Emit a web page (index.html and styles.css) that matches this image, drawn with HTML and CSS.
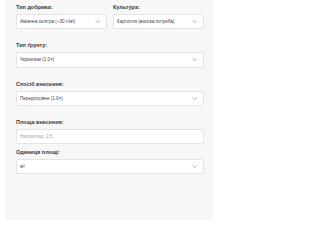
FILE: index.html
```html
<!DOCTYPE html>
<html lang="uk">
<head>
<meta charset="utf-8">
<link rel="stylesheet" href="styles.css">
</head>
<body>
<div class="panel">
  <div class="row">
    <div class="group">
      <div class="label">Тип добрива:</div>
      <div class="field select"><span>Аміачна селітра (~30 г/м²)</span><svg class="chev" viewBox="0 0 10 6"><path d="M1 1l4 4 4-4"/></svg></div>
    </div>
    <div class="group">
      <div class="label">Культура:</div>
      <div class="field select"><span>Картопля (висока потреба)</span><svg class="chev" viewBox="0 0 10 6"><path d="M1 1l4 4 4-4"/></svg></div>
    </div>
  </div>
  <div class="group">
    <div class="label">Тип ґрунту:</div>
    <div class="field select"><span>Чорнозем (1.0×)</span><svg class="chev" viewBox="0 0 10 6"><path d="M1 1l4 4 4-4"/></svg></div>
  </div>
  <div class="group">
    <div class="label">Спосіб внесення:</div>
    <div class="field select"><span>Передпосівне (1.0×)</span><svg class="chev" viewBox="0 0 10 6"><path d="M1 1l4 4 4-4"/></svg></div>
  </div>
  <div class="group tight">
    <div class="label">Площа внесення:</div>
    <div class="field"><span class="placeholder">Наприклад, 2.5</span></div>
  </div>
  <div class="group">
    <div class="label">Одиниця площі:</div>
    <div class="field select"><span>м²</span><svg class="chev" viewBox="0 0 10 6"><path d="M1 1l4 4 4-4"/></svg></div>
  </div>
</div>
</body>
</html>
```
FILE: styles.css
```css
html, body {
  margin: 0;
  padding: 0;
  background: #ffffff;
  overflow: hidden;
}
body {
  font-family: "Liberation Sans", Arial, sans-serif;
  color: #333333;
}
.panel {
  margin-left: 5px;
  width: 208px;
  min-height: 220px;
  box-sizing: border-box;
  background: #f7f7f7;
  padding: 4px 9px 0 11px;
}
.row {
  display: grid;
  grid-template-columns: 1fr 1fr;
  gap: 6px;
}
.group {
  margin-bottom: 13px;
}
.group.tight {
  margin-bottom: 5px;
}
.label {
  font-size: 5.5px;
  line-height: 7px;
  font-weight: bold;
  color: #3a3a3a;
  margin-bottom: 3px;
}
.field {
  height: 15.3px;
  box-sizing: border-box;
  background: #ffffff;
  border: 1px solid #e4e4e4;
  border-radius: 2px;
  display: flex;
  align-items: center;
  justify-content: space-between;
  padding: 0 6px 0 3px;
  font-size: 4.6px;
  color: #444444;
  white-space: nowrap;
  overflow: hidden;
}
.placeholder {
  color: #a8a8a8;
}
.chev {
  width: 5px;
  height: 3px;
  flex: none;
}
.chev path {
  fill: none;
  stroke: #8a8a8a;
  stroke-width: 1.2;
}
```
